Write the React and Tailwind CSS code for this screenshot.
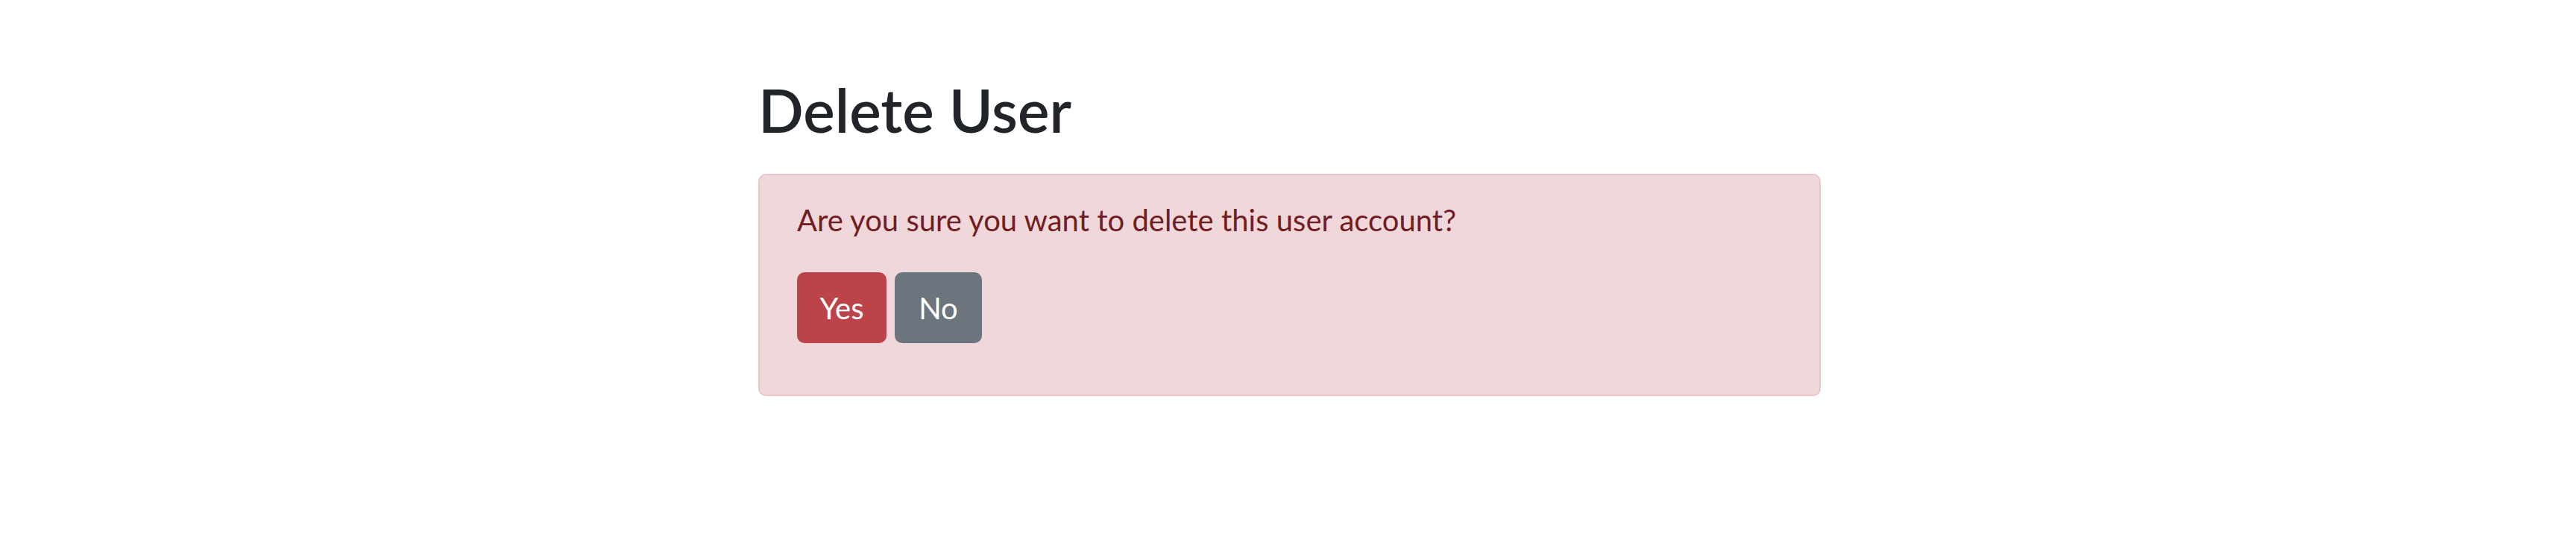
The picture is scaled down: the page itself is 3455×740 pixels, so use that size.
export default function App() {
  return (
    <div className="min-h-[740px] bg-white pt-[99px] pl-[4px] font-['Lato',sans-serif]">
      <div className="mx-auto w-[1425px]">
        <h1 className="mb-[38px] text-[80px] font-semibold leading-[96px] text-[#212529]">Delete User</h1>
        <div className="rounded-[10px] border-2 border-[#e9c5c9] bg-[#efd7da] px-[50px] pt-[30px] pb-[69px]">
          <p className="mb-[40px] text-[40px] leading-[60px] text-[#721c24]">
            Are you sure you want to delete this user account?
          </p>
          <div className="flex gap-[11px]">
            <button className="h-[95px] w-[120px] rounded-[10px] bg-[#bd434b] text-[40px] leading-[60px] text-white">
              Yes
            </button>
            <button className="h-[95px] w-[117px] rounded-[10px] bg-[#6c757d] text-[40px] leading-[60px] text-white">
              No
            </button>
          </div>
        </div>
      </div>
    </div>
  )
}
